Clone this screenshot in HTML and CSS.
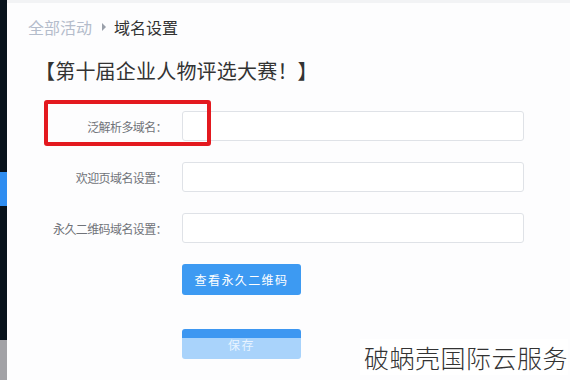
FILE: index.html
```html
<!DOCTYPE html>
<html>

<head>
    <meta charset="utf-8" />
    <title>域名设置</title>
    <link rel="stylesheet" href="styles.css">
</head>

<body>
    <div class="layout">
        <div class="sidebar">
            <div class="side-dark"></div>
            <div class="side-active"></div>
            <div class="side-dark grow"></div>
            <div class="side-gray"></div>
        </div>
        <div class="main">
            <div class="breadcrumb">
                <span class="crumb-link">全部活动</span>
                <span class="crumb-arrow"></span>
                <span class="crumb-current">域名设置</span>
            </div>
            <h1 class="title">【第十届企业人物评选大赛！】</h1>
            <div class="form">
                <div class="mark"></div>
                <div class="row">
                    <label class="label">泛解析多域名：</label>
                    <input class="field" />
                </div>
                <div class="row">
                    <label class="label">欢迎页域名设置：</label>
                    <input class="field" />
                </div>
                <div class="row">
                    <label class="label">永久二维码域名设置：</label>
                    <input class="field" />
                </div>
                <div class="row">
                    <span class="label"></span>
                    <button class="btn">查看永久二维码</button>
                </div>
                <div class="row save-row">
                    <span class="label"></span>
                    <button class="btn btn-save">保存</button>
                </div>
            </div>
            <div class="watermark">破蜗壳国际云服务</div>
        </div>
    </div>
</body>

</html>
```

FILE: styles.css
```css
* {
    box-sizing: border-box;
    font-family: "Noto Sans CJK SC", "Liberation Sans", sans-serif;
}

body,
html {
    margin: 0;
    height: 100%;
}

body {
    background-color: #fff;
    overflow: hidden;
}

.layout {
    display: flex;
    height: 380px;
}

.sidebar {
    width: 7px;
    display: flex;
    flex-direction: column;
}

.side-dark {
    background-color: #08121c;
    height: 172px;
}

.side-dark.grow {
    height: auto;
    flex: 1;
}

.side-active {
    background-color: #2f8df0;
    height: 34px;
}

.side-gray {
    background-color: #a2a2a6;
    height: 40px;
}

.main {
    flex: 1;
    position: relative;
    border-top: 3px solid #f2f3f5;
    background-color: #fdfdfe;
}

.breadcrumb {
    display: flex;
    align-items: center;
    padding: 13px 0 0 21px;
    height: 35px;
    font-size: 16px;
}

.crumb-link {
    color: #b4bccb;
}

.crumb-arrow {
    width: 0;
    height: 0;
    margin: 0 8px 0 10px;
    border-left: 4px solid #9aa0aa;
    border-top: 4px solid transparent;
    border-bottom: 4px solid transparent;
}

.crumb-current {
    color: #333;
}

.title {
    margin: 0;
    padding: 20px 0 0 28px;
    font-size: 20px;
    font-weight: normal;
    color: #333;
    line-height: 26px;
    letter-spacing: 0.2px;
}

.form {
    position: relative;
    padding-top: 27px;
}

.mark {
    position: absolute;
    left: 37px;
    top: 16px;
    width: 167px;
    height: 46px;
    border: 4px solid #e3191f;
    border-radius: 3px;
}

.row {
    display: flex;
    align-items: center;
    margin-bottom: 21px;
}

.label {
    width: 160px;
    text-align: right;
    font-size: 12px;
    color: #707379;
    letter-spacing: -0.6px;
}

.field {
    margin-left: 15px;
    width: 342px;
    height: 30px;
    border: 1px solid #dfe2e7;
    border-radius: 3px;
    background-color: #fff;
}

.btn {
    margin-left: 15px;
    width: 119px;
    height: 31px;
    border: 0;
    border-radius: 3px;
    background-color: #3d9af2;
    color: #fff;
    font-size: 12px;
    letter-spacing: 1.4px;
}

.save-row {
    margin-top: 34px;
}

.btn-save {
    height: 30px;
    background: linear-gradient(#3d97f1 0, #3d97f1 9px, #a9d3fb 9px);
    color: #e8f3ff;
    padding-top: 2px;
}

.watermark {
    position: absolute;
    right: 2px;
    bottom: 5px;
    padding: 0 0 0 4px;
    background-color: #fff;
    font-size: 25px;
    font-weight: 300;
    color: #333;
    letter-spacing: 0.5px;
}
```
